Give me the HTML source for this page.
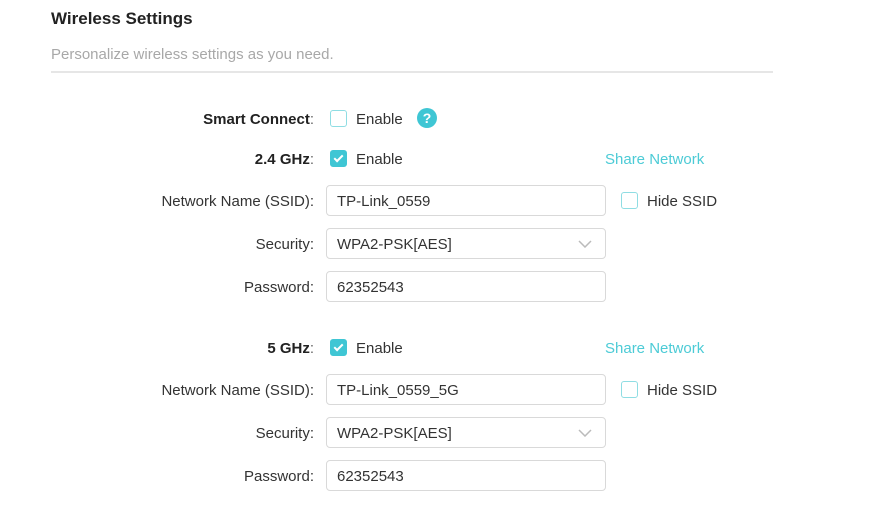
<!DOCTYPE html>
<html><head><style>
body{margin:0;width:892px;height:508px;background:#fff;font-family:"Liberation Sans",Arial,sans-serif;color:#333;position:relative;overflow:hidden}
.a{position:absolute;white-space:nowrap}
h1{position:absolute;left:51px;top:9px;margin:0;font-size:17px;font-weight:bold;color:#222}
.sub{left:51px;top:46px;font-size:15px;color:#a8a8a8}
.line{position:absolute;left:51px;top:71px;width:722px;height:2px;background:#e6e6e6}
.lbl{right:578px;font-size:15px;color:#333}
.lbl b{font-weight:bold;color:#222}
.lbl span{color:#666}
.in{position:absolute;left:326px;border:1px solid #d9d9d9;border-radius:4px;font-size:15px;line-height:31px;padding-left:10px;box-sizing:border-box;width:280px;height:31px;color:#333}
.cb{position:absolute;width:17px;height:17px;border:1.5px solid #8fdde3;border-radius:3px;box-sizing:border-box}
.cb.on{background:#3fc6d4;border-color:#3fc6d4}
.cb.on::after{content:"";position:absolute;left:5px;top:2px;width:3px;height:7px;border:solid #fff;border-width:0 2px 2px 0;transform:rotate(45deg)}
.t{font-size:15px;color:#333}
.share{font-size:15px;color:#4ccbd6}
.chev{position:absolute;left:578px;width:14px;height:8px}
</style></head><body>
<h1>Wireless Settings</h1>
<div class="a sub">Personalize wireless settings as you need.</div>
<div class="line"></div>

<div class="a lbl" style="top:111px"><b>Smart Connect</b><span>:</span></div>
<div class="cb" style="left:330px;top:110px"></div>
<div class="a t" style="left:356px;top:111px">Enable</div>
<svg class="a" style="left:417px;top:108px" width="20" height="20" viewBox="0 0 20 20"><circle cx="10" cy="10" r="10" fill="#3fc6d4"/><text x="10" y="15" text-anchor="middle" font-family="Liberation Sans" font-weight="bold" font-size="14" fill="#fff">?</text></svg>

<div class="a lbl" style="top:151px"><b>2.4 GHz</b><span>:</span></div>
<div class="cb on" style="left:330px;top:150px"></div>
<div class="a t" style="left:356px;top:151px">Enable</div>
<div class="a share" style="left:605px;top:151px">Share Network</div>

<div class="a lbl" style="top:193px">Network Name (SSID):</div>
<div class="in" style="top:185px">TP-Link_0559</div>
<div class="cb" style="left:621px;top:192px"></div>
<div class="a t" style="left:647px;top:193px">Hide SSID</div>

<div class="a lbl" style="top:236px">Security:</div>
<div class="in" style="top:228px">WPA2-PSK[AES]</div>
<svg class="chev" style="top:240px" viewBox="0 0 14 8"><path d="M1 1L7 7L13 1" fill="none" stroke="#bbb" stroke-width="1.5"/></svg>

<div class="a lbl" style="top:279px">Password:</div>
<div class="in" style="top:271px">62352543</div>

<div class="a lbl" style="top:340px"><b>5 GHz</b><span>:</span></div>
<div class="cb on" style="left:330px;top:339px"></div>
<div class="a t" style="left:356px;top:340px">Enable</div>
<div class="a share" style="left:605px;top:340px">Share Network</div>

<div class="a lbl" style="top:382px">Network Name (SSID):</div>
<div class="in" style="top:374px">TP-Link_0559_5G</div>
<div class="cb" style="left:621px;top:381px"></div>
<div class="a t" style="left:647px;top:382px">Hide SSID</div>

<div class="a lbl" style="top:425px">Security:</div>
<div class="in" style="top:417px">WPA2-PSK[AES]</div>
<svg class="chev" style="top:429px" viewBox="0 0 14 8"><path d="M1 1L7 7L13 1" fill="none" stroke="#bbb" stroke-width="1.5"/></svg>

<div class="a lbl" style="top:468px">Password:</div>
<div class="in" style="top:460px">62352543</div>
</body></html>
